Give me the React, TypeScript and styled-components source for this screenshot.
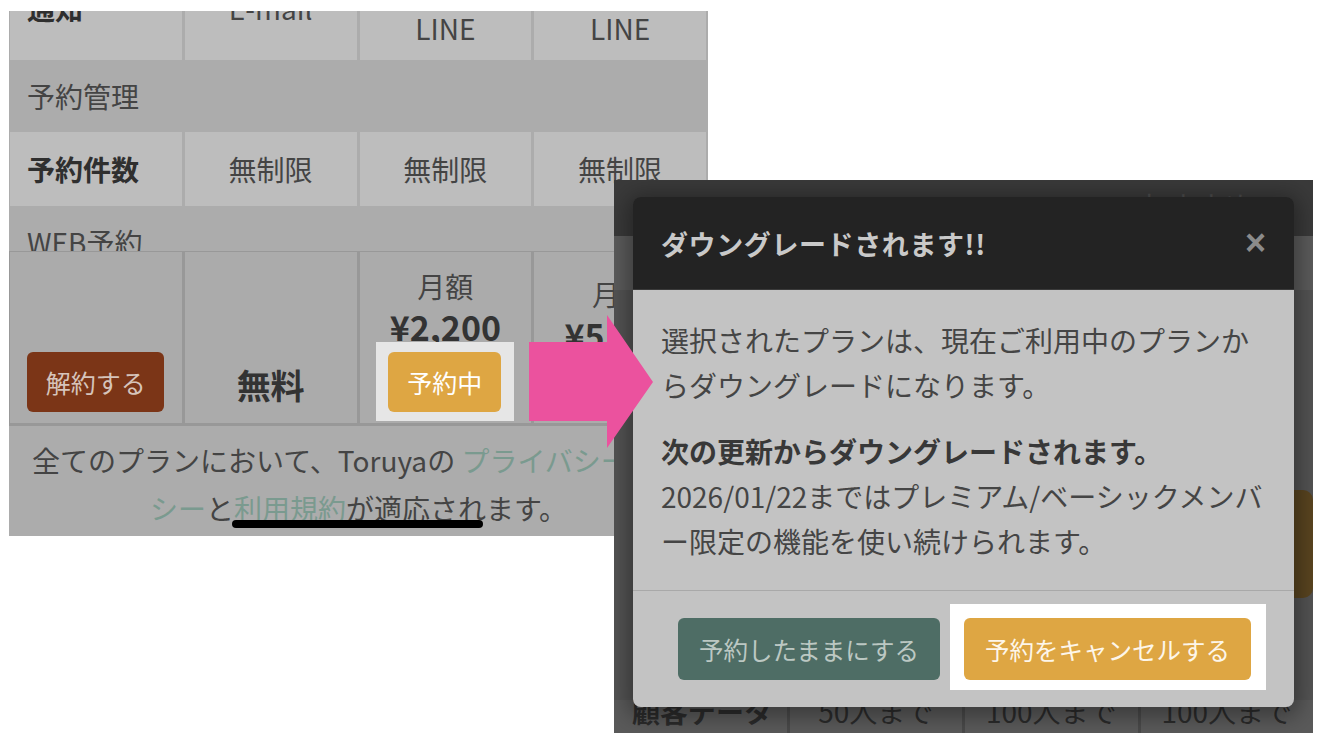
import React from "react";
import styled, { createGlobalStyle } from "styled-components";

const Global = createGlobalStyle`
  html, body { margin: 0; padding: 0; background: #fff; }
  body { font-family: "Noto Sans CJK JP", "Noto Sans", sans-serif; }
  * { box-sizing: border-box; }
`;

const Stage = styled.div`
  position: relative;
  width: 1322px;
  height: 744px;
  overflow: hidden;
  background: #fff;
  display: grid;
  grid-template-columns: 9px 605px 94px 605px 1fr;
  grid-template-rows: 11px 169px 356px 197px 1fr;
`;

/* ---------- left screenshot ---------- */
const LeftShot = styled.section`
  grid-column: 2 / 4;
  grid-row: 2 / 4;
  position: relative;
  overflow: hidden;
  display: flex;
  flex-direction: column;
  background: #acacac;
`;

const ScrollArea = styled.div`
  flex: none;
  height: 240px;
  overflow: hidden;
`;

const Table = styled.div`
  display: grid;
  grid-template-columns: repeat(4, 1fr);
  column-gap: 3px;
  padding: 0 2px 0 1px;
  margin-top: -55px;
`;

const Cell = styled.div<{ $h: number; $label?: boolean; $lh?: number }>`
  height: ${(p) => p.$h}px;
  background: #bdbdbd;
  display: flex;
  flex-direction: column;
  justify-content: center;
  align-items: ${(p) => (p.$label ? "flex-start" : "center")};
  padding-left: ${(p) => (p.$label ? "17px" : "0")};
  font-size: 28px;
  line-height: ${(p) => p.$lh ?? 44}px;
  color: ${(p) => (p.$label ? "#2f2f2f" : "#444")};
  font-weight: ${(p) => (p.$label ? 700 : 400)};
  white-space: nowrap;
`;

const Section = styled.div<{ $h: number }>`
  grid-column: 1 / -1;
  height: ${(p) => p.$h}px;
  display: flex;
  align-items: center;
  padding-left: 17px;
  font-size: 28px;
  color: #444;
`;

const StickyRow = styled.div`
  flex: none;
  height: 175px;
  display: grid;
  grid-template-columns: repeat(4, 1fr);
  column-gap: 3px;
  padding: 1px 2px 3px 1px;
  background: #989898;
`;

const StickyCell = styled.div<{ $pb?: number }>`
  background: #ababab;
  display: flex;
  flex-direction: column;
  align-items: center;
  justify-content: flex-end;
  padding-bottom: ${(p) => p.$pb ?? 0}px;
  overflow: hidden;
  white-space: nowrap;
`;

const FreeLabel = styled.div`
  font-size: 34px;
  line-height: 48px;
  font-weight: 700;
  color: #333;
`;

const PriceCaption = styled.div`
  font-size: 28px;
  line-height: 40px;
  color: #444;
  margin-bottom: 6px;
`;

const PriceValue = styled.div<{ $mb?: number }>`
  font-size: 34px;
  line-height: 30px;
  font-weight: 700;
  color: #333;
  margin-bottom: ${(p) => p.$mb ?? 0}px;
`;

const Highlight = styled.div`
  background: #e6e6e6;
  padding: 10px 13px 9px 12px;
  margin-bottom: 2px;
`;

const ShotButton = styled.div<{ $bg: string; $fg: string; $w: number; $mb?: number }>`
  width: ${(p) => p.$w}px;
  height: 60px;
  border-radius: 6px;
  background: ${(p) => p.$bg};
  color: ${(p) => p.$fg};
  font-size: 25px;
  display: flex;
  align-items: center;
  justify-content: center;
  margin-bottom: ${(p) => p.$mb ?? 0}px;
  flex: none;
`;

const Notice = styled.p`
  flex: 1;
  margin: 0;
  padding: 10px 6px 0;
  text-align: center;
  font-size: 28px;
  line-height: 48px;
  color: #444;
  white-space: nowrap;
`;

const NoticeLink = styled.span`
  color: #7a9a8f;
`;

const HomeBar = styled.div`
  position: absolute;
  left: 223px;
  top: 509px;
  width: 251px;
  height: 8px;
  border-radius: 4px;
  background: #000;
`;

/* ---------- right screenshot ---------- */
const RightShot = styled.section`
  grid-column: 3 / 5;
  grid-row: 3 / 5;
  position: relative;
  overflow: hidden;
  display: flex;
  flex-direction: column;
  background: #555;
`;

const DimHeader = styled.div`
  flex: none;
  height: 56px;
  background: #3a3a3a;
  display: flex;
  justify-content: flex-end;
  padding: 11px 62px 0 0;
  font-size: 28px;
  line-height: 28px;
  color: #4e4e4e;
`;

const DimBand = styled.div`
  flex: none;
  height: 54px;
  background: #5c5c5c;
`;

const DimBody = styled.div`
  flex: 1;
  background: #545454;
  display: flex;
  justify-content: flex-end;
  align-items: flex-start;
  padding-top: 200px;
`;

const DimButton = styled.div`
  width: 62px;
  height: 108px;
  border-radius: 10px;
  background: #5a4520;
`;

const DimRow = styled.div`
  flex: none;
  height: 33px;
  display: grid;
  grid-template-columns: repeat(4, 1fr);
  column-gap: 3px;
  background: #4a4a4a;
`;

const DimCell = styled.div<{ $label?: boolean }>`
  background: #5a5a5a;
  font-size: 28px;
  line-height: 22px;
  color: #2b2b2b;
  font-weight: ${(p) => (p.$label ? 700 : 400)};
  text-align: ${(p) => (p.$label ? "left" : "center")};
  padding-left: ${(p) => (p.$label ? "18px" : "0")};
  white-space: nowrap;
  overflow: hidden;
`;

const Modal = styled.div`
  position: absolute;
  left: 19px;
  top: 17px;
  width: 661px;
  height: 510px;
  border-radius: 8px;
  overflow: hidden;
  display: flex;
  flex-direction: column;
  box-shadow: 0 4px 22px 6px rgba(0, 0, 0, 0.35);
`;

const ModalHeader = styled.header`
  flex: none;
  height: 93px;
  background: #232323;
  border-bottom: 1px solid #3a3a3a;
  display: flex;
  align-items: center;
  justify-content: space-between;
  padding: 0 28px 0 28px;
`;

const ModalTitle = styled.h2`
  margin: 0;
  font-size: 27px;
  font-weight: 700;
  color: #c9c9c9;
  letter-spacing: 0.6px;
`;

const CloseGlyph = styled.span`
  font-family: "Liberation Sans", Arial, sans-serif;
  font-size: 36px;
  line-height: 36px;
  font-weight: 700;
  color: #8b8b8b;
`;

const ModalBody = styled.div`
  flex: none;
  height: 300px;
  background: #c3c3c3;
  padding: 28px 28px 0;
  font-size: 28px;
  line-height: 45px;
  color: #454545;
`;

const Para = styled.p<{ $mt?: number }>`
  margin: ${(p) => p.$mt ?? 0}px 0 0;
`;

const Strong = styled.strong`
  font-weight: 700;
  color: #383838;
`;

const ModalFooter = styled.footer`
  flex: 1;
  background: #c3c3c3;
  border-top: 1px solid #a9a9a9;
  display: flex;
  justify-content: flex-end;
  align-items: flex-start;
  gap: 10px;
  padding: 13px 28px 0 0;
`;

const ModalButton = styled.button<{ $bg: string; $fg: string; $mt?: number }>`
  font-family: inherit;
  height: 62px;
  padding: 0 21px;
  border: none;
  border-radius: 6px;
  background: ${(p) => p.$bg};
  color: ${(p) => p.$fg};
  font-size: 24.5px;
  margin-top: ${(p) => p.$mt ?? 0}px;
  white-space: nowrap;
`;

const ModalHighlight = styled.div`
  background: #fff;
  padding: 14px 15px 10px 14px;
`;

const Arrow = styled.svg`
  position: absolute;
  left: 529px;
  top: 315px;
  width: 124px;
  height: 133px;
  z-index: 5;
`;

export default function App() {
  return (
    <>
      <Global />
      <Stage>
        <LeftShot>
          <ScrollArea>
            <Table>
              <Cell $h={104} $label>通知</Cell>
              <Cell $h={104}>E-mail</Cell>
              <Cell $h={104} $lh={40}>
                <span>E-mail</span>
                <span>LINE</span>
              </Cell>
              <Cell $h={104} $lh={40}>
                <span>E-mail</span>
                <span>LINE</span>
              </Cell>
              <Section $h={72}>予約管理</Section>
              <Cell $h={74} $label>予約件数</Cell>
              <Cell $h={74}>無制限</Cell>
              <Cell $h={74}>無制限</Cell>
              <Cell $h={74}>無制限</Cell>
              <Section $h={72}>WEB予約</Section>
            </Table>
          </ScrollArea>
          <StickyRow>
            <StickyCell>
              <ShotButton $bg="#7b3517" $fg="#d6c4bb" $w={137} $mb={11}>
                解約する
              </ShotButton>
            </StickyCell>
            <StickyCell $pb={14}>
              <FreeLabel>無料</FreeLabel>
            </StickyCell>
            <StickyCell>
              <PriceCaption>月額</PriceCaption>
              <PriceValue>¥2,200</PriceValue>
              <Highlight>
                <ShotButton $bg="#dea643" $fg="#ffffff" $w={113}>
                  予約中
                </ShotButton>
              </Highlight>
            </StickyCell>
            <StickyCell>
              <PriceCaption>月額</PriceCaption>
              <PriceValue $mb={2}>¥5,500</PriceValue>
              <ShotButton $bg="#dea643" $fg="#ffffff" $w={113} $mb={11}>
                変更
              </ShotButton>
            </StickyCell>
          </StickyRow>
          <Notice>
            全てのプランにおいて、Toruyaの <NoticeLink>プライバシーポリ<br />シー</NoticeLink>と
            <NoticeLink>利用規約</NoticeLink>が適応されます。
          </Notice>
          <HomeBar />
        </LeftShot>

        <RightShot>
          <DimHeader>おすすめ</DimHeader>
          <DimBand />
          <DimBody>
            <DimButton />
          </DimBody>
          <DimRow>
            <DimCell $label>顧客データ</DimCell>
            <DimCell>50人まで</DimCell>
            <DimCell>100人まで</DimCell>
            <DimCell>100人まで</DimCell>
          </DimRow>

          <Modal>
            <ModalHeader>
              <ModalTitle>ダウングレードされます!!</ModalTitle>
              <CloseGlyph>×</CloseGlyph>
            </ModalHeader>
            <ModalBody>
              <Para>選択されたプランは、現在ご利用中のプランからダウングレードになります。</Para>
              <Para $mt={21}>
                <Strong>次の更新からダウングレードされます。</Strong>
                <br />
                2026/01/22まではプレミアム/ベーシックメンバー限定の機能を使い続けられます。
              </Para>
            </ModalBody>
            <ModalFooter>
              <ModalButton $bg="#4e6d65" $fg="#bcc8c3" $mt={14}>
                予約したままにする
              </ModalButton>
              <ModalHighlight>
                <ModalButton $bg="#dea643" $fg="#fdf6ea">
                  予約をキャンセルする
                </ModalButton>
              </ModalHighlight>
            </ModalFooter>
          </Modal>
        </RightShot>

        <Arrow viewBox="0 0 124 133">
          <polygon points="0,27 78,27 78,0 124,67 78,133 78,106 0,106" fill="#eb529e" />
        </Arrow>
      </Stage>
    </>
  );
}
